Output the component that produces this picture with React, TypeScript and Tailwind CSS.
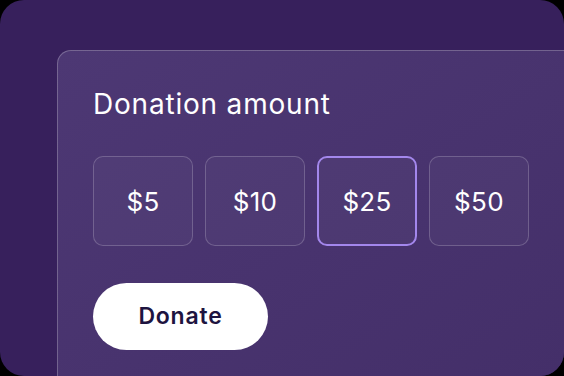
import React from "react";

const amounts = ["$5", "$10", "$25", "$50"];

export default function App() {
  return (
    <div className="w-[564px] h-[376px] bg-black">
      <div
        className="w-[564px] h-[376px] rounded-[24px] overflow-hidden bg-[#37205c] pl-[57px] pt-[50px]"
        style={{ fontFamily: "Inter, 'Noto Sans', sans-serif" }}
      >
        <div className="w-[560px] h-[360px] rounded-tl-[14px] border-l border-t border-white/25 bg-gradient-to-br from-[#4d3874] to-[#432e68] pl-[35px] pt-[36px]">
          <h1 className="text-[28px] leading-[34px] text-white font-normal tracking-[0.8px]">
            Donation amount
          </h1>
          <div className="flex gap-3 mt-[35px]">
            {amounts.map((a) => (
              <div
                key={a}
                className={
                  a === "$25"
                    ? "w-[100px] h-[90px] rounded-[10px] border-2 border-[#a387ec] bg-white/[0.03] flex items-center justify-center text-white text-[26px] tracking-[0.3px]"
                    : "w-[100px] h-[90px] rounded-[10px] border border-white/20 bg-white/[0.03] flex items-center justify-center text-white text-[26px] tracking-[0.3px]"
                }
              >
                {a}
              </div>
            ))}
          </div>
          <button className="mt-[37px] w-[175px] h-[67px] rounded-full bg-white text-[#1e1440] font-semibold text-[23px] tracking-[0.8px] flex items-center justify-center">
            Donate
          </button>
        </div>
      </div>
    </div>
  );
}
